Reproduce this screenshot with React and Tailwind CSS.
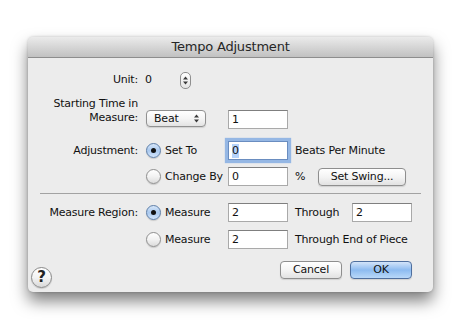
import React from 'react';

const FONT = { fontFamily: '"DejaVu Sans", "Liberation Sans", sans-serif' };

function Arrows({ className = '' }) {
  return (
    <svg width="5" height="9" viewBox="0 0 5 9" className={className}>
      <path d="M2.5 0.5 L5 3.5 L0 3.5 Z" fill="#3a3a3a" />
      <path d="M0 5.5 L5 5.5 L2.5 8.5 Z" fill="#3a3a3a" />
    </svg>
  );
}

function Radio({ checked, label }) {
  return (
    <div className="flex w-[82px] items-center gap-[4px]">
      <div
        className={[
          'flex h-[15px] w-[15px] items-center justify-center rounded-full border shadow-[0_1px_1px_rgba(0,0,0,0.15)]',
          checked
            ? 'border-[#5d7ea8] bg-gradient-to-b from-[#d6e6f8] via-[#a9c8ee] to-[#d2e5fb]'
            : 'border-[#8f8f8f] bg-gradient-to-b from-[#ffffff] via-[#f2f2f2] to-[#dcdcdc]',
        ].join(' ')}
      >
        {checked ? <div className="h-[5px] w-[5px] rounded-full bg-[#111]" /> : null}
      </div>
      <span>{label}</span>
    </div>
  );
}

function Field({ value, focused }) {
  return (
    <div
      className={[
        'flex h-[19px] w-[60px] items-center border bg-white pl-[3px]',
        focused
          ? 'border-[#6a8dc0] shadow-[0_0_1px_3px_rgba(120,165,225,0.75)]'
          : 'border-[#a9a9a9] border-t-[#7f7f7f]',
      ].join(' ')}
    >
      {focused ? <span className="bg-[#b5d3fb]">{value}</span> : <span>{value}</span>}
    </div>
  );
}

function PushButton({ children, width, primary }) {
  return (
    <div
      className={[
        'flex h-[18px] items-center justify-center rounded-[4px] border shadow-[0_1px_1px_rgba(0,0,0,0.12)]',
        width,
        primary
          ? 'border-[#4f6f9e] bg-gradient-to-b from-[#d3e4f9] via-[#8dbbf0] to-[#b9d8f9]'
          : 'border-[#8e8e8e] bg-gradient-to-b from-[#ffffff] via-[#f4f4f4] to-[#e2e2e2]',
      ].join(' ')}
    >
      {children}
    </div>
  );
}

function Label({ children }) {
  return <div className="w-[110px] shrink-0 text-right">{children}</div>;
}

export default function App() {
  return (
    <div
      className="h-[329px] w-[461px] overflow-hidden bg-white pl-[28px] pt-[37px] text-[11px] leading-[14px] tracking-[-0.2px] text-[#111]"
      style={FONT}
    >
      <div className="flex h-[255px] w-[405px] flex-col rounded-[5px] bg-[#ececec] shadow-[0_9px_16px_rgba(0,0,0,0.5),0_0_3px_rgba(0,0,0,0.2)]">
        <div className="flex h-[21px] shrink-0 items-center justify-center rounded-t-[5px] border-b border-[#8d8d8d] bg-gradient-to-b from-[#ebebeb] to-[#c1c1c1] text-[13px] text-[#262626]">
          Tempo Adjustment
        </div>

        <div className="flex flex-1 flex-col pt-[13px]">
          <div className="flex h-[18px] items-center">
            <Label>Unit:</Label>
            <span className="ml-[7px] w-[35px]">0</span>
            <div className="flex h-[17px] w-[11px] items-center justify-center rounded-[5px] border border-[#8f8f8f] bg-gradient-to-b from-white to-[#e4e4e4]">
              <Arrows />
            </div>
          </div>

          <div className="mt-[8px] flex h-[32px] items-start">
            <Label>
              Starting Time in
              <br />
              Measure:
            </Label>
            <div className="ml-[8px] mt-[13px] flex h-[17px] w-[60px] items-center justify-between rounded-[4px] border border-[#919191] bg-gradient-to-b from-white via-[#f5f5f5] to-[#e3e3e3] pl-[7px] pr-[6px] shadow-[0_1px_1px_rgba(0,0,0,0.12)]">
              <span>Beat</span>
              <Arrows />
            </div>
            <div className="ml-[22px] mt-[13px]">
              <Field value="1" />
            </div>
          </div>

          <div className="mt-[12px] flex h-[19px] items-center">
            <Label>Adjustment:</Label>
            <div className="ml-[8px]">
              <Radio checked label="Set To" />
            </div>
            <Field value="0" focused />
            <span className="ml-[7px]">Beats Per Minute</span>
          </div>

          <div className="mt-[7px] flex h-[19px] items-center">
            <Label />
            <div className="ml-[8px]">
              <Radio label="Change By" />
            </div>
            <Field value="0" />
            <span className="ml-[7px] w-[23px]">%</span>
            <PushButton width="w-[88px]">Set Swing...</PushButton>
          </div>

          <div className="mx-[12px] mt-[7px] h-px bg-[#a2a2a2]" />

          <div className="mt-[9px] flex h-[19px] items-center">
            <Label>Measure Region:</Label>
            <div className="ml-[8px]">
              <Radio checked label="Measure" />
            </div>
            <Field value="2" />
            <span className="ml-[7px] w-[57px]">Through</span>
            <Field value="2" />
          </div>

          <div className="mt-[8px] flex h-[19px] items-center">
            <Label />
            <div className="ml-[8px]">
              <Radio label="Measure" />
            </div>
            <Field value="2" />
            <span className="ml-[7px]">Through End of Piece</span>
          </div>

          <div className="mt-[12px] flex items-start pl-[3px] pr-[21px]">
            <div className="mt-[6px] flex h-[21px] w-[21px] items-center justify-center rounded-full border border-[#8a8a8a] bg-gradient-to-b from-white via-[#f3f3f3] to-[#d9d9d9] text-[15px] font-semibold leading-none text-[#222] shadow-[0_1px_1px_rgba(0,0,0,0.15)]">
              ?
            </div>
            <div className="ml-auto flex gap-[8px]">
              <PushButton width="w-[62px]">Cancel</PushButton>
              <PushButton width="w-[62px]" primary>
                OK
              </PushButton>
            </div>
          </div>
        </div>
      </div>
    </div>
  );
}
